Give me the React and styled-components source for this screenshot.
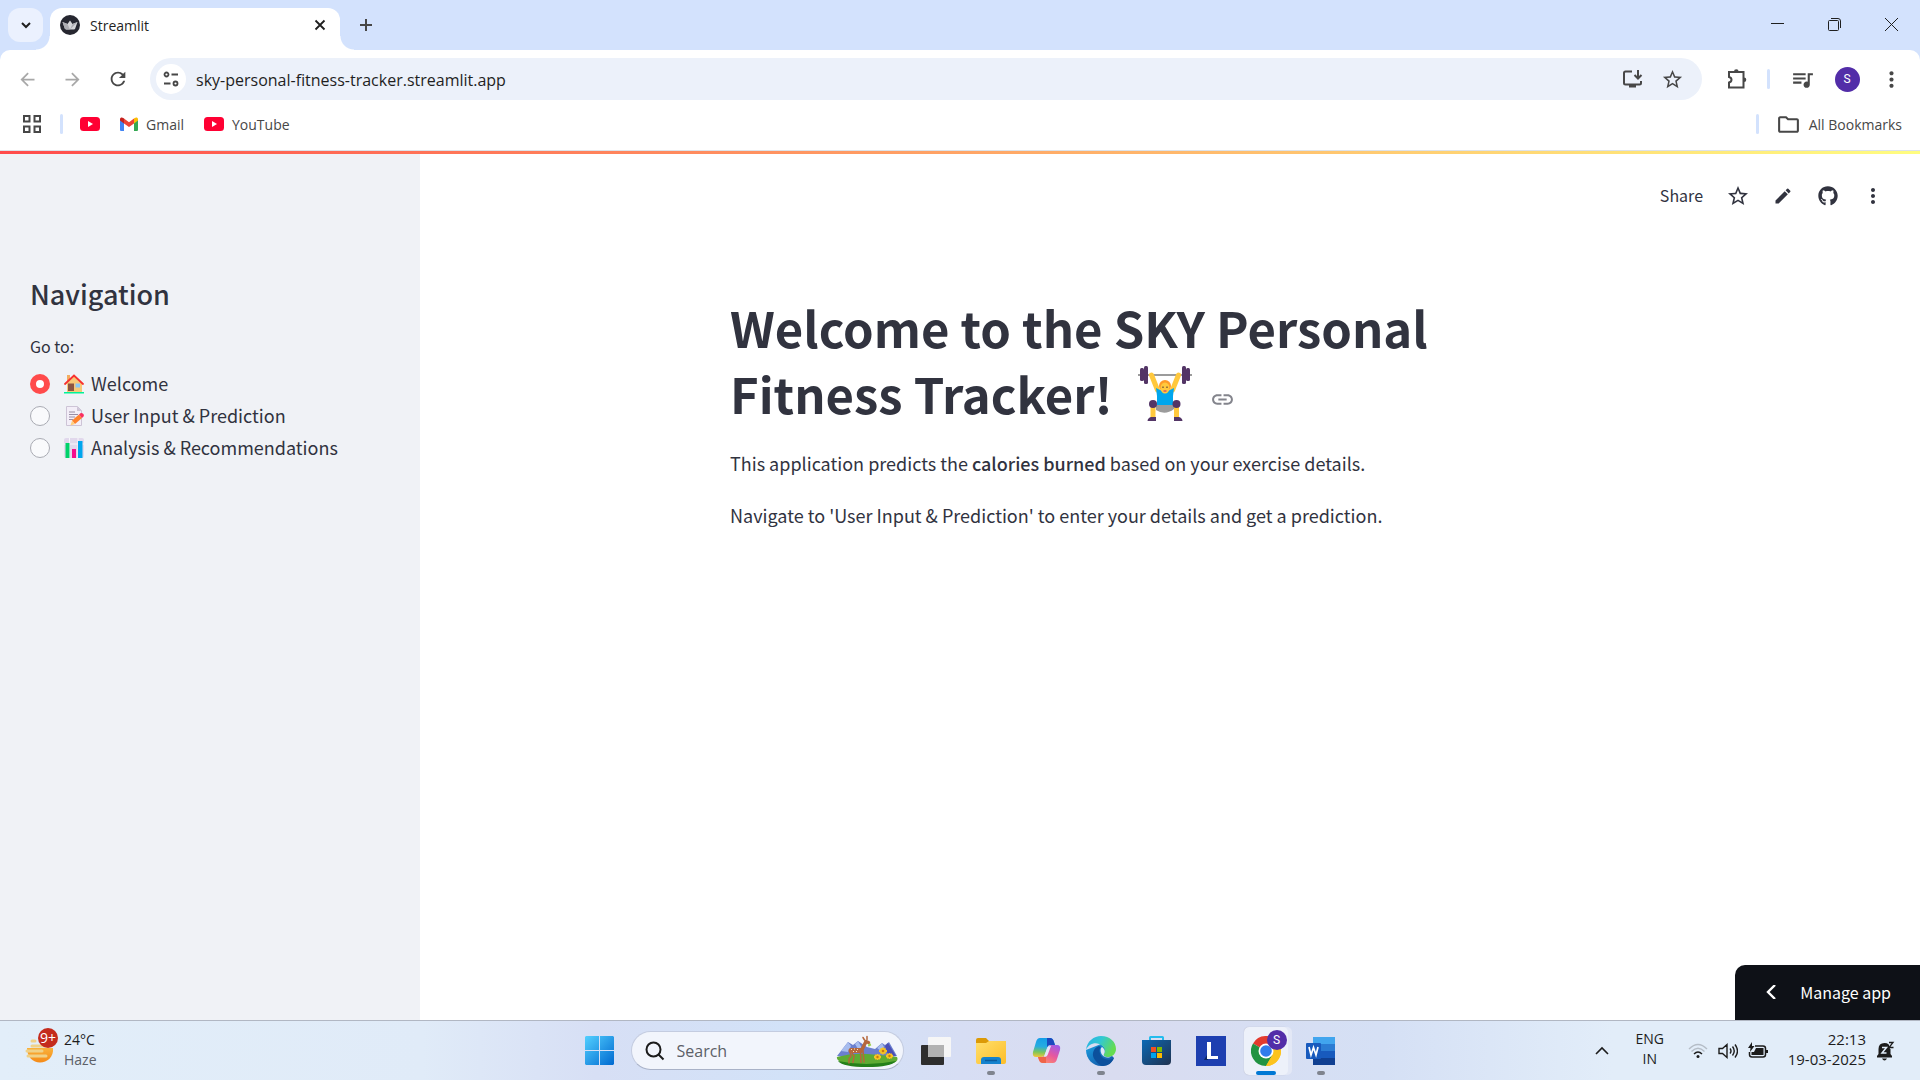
import React from "react";
import styled, { createGlobalStyle, css } from "styled-components";
import { FaGithub } from "react-icons/fa";
import {
  MdStarBorder, MdEdit, MdMoreVert, MdQueueMusic, MdOutlineFolder, MdArrowBack,
  MdArrowForward, MdRefresh, MdLink,
} from "react-icons/md";

const sourceSans = `"Noto Sans CJK JP", "Noto Sans", sans-serif`;
const uiSans = `"Open Sans", "Noto Sans", sans-serif`;

const GlobalStyle = createGlobalStyle`
  *, *::before, *::after { box-sizing: border-box; }
  body { margin: 0; background: #fff; font-family: ${uiSans}; }
  button { border: 0; padding: 0; background: none; font: inherit; color: inherit; }
  svg { display: block; flex: none; }
`;

const Screen = styled.div`
  display: flex;
  flex-direction: column;
  min-height: 100vh;
`;

/* ---------- browser chrome ---------- */
const TabStrip = styled.div`
  display: flex;
  align-items: flex-end;
  height: 50px;
  padding-left: 8px;
  background: #d3e2fd;
  color: #1f1f1f;
`;
const TabSearch = styled.button`
  display: grid;
  place-items: center;
  width: 35px;
  height: 34px;
  margin: 0 7px 8px 0;
  border-radius: 12px;
  background: #ebf1fe;
`;
const Tab = styled.div`
  position: relative;
  display: flex;
  align-items: center;
  gap: 10px;
  width: 290px;
  height: 42px;
  padding: 0 14px 8px 10px;
  border-radius: 12px 12px 0 0;
  background: #fff;
  font-size: 14px;
  &::before, &::after {
    content: "";
    position: absolute;
    bottom: 0;
    width: 14px;
    height: 14px;
  }
  &::before { left: -14px; background: radial-gradient(circle at 0 0, transparent 13px, #fff 14px); }
  &::after { right: -14px; background: radial-gradient(circle at 100% 0, transparent 13px, #fff 14px); }
`;
const TabTitle = styled.span`
  flex: 1;
`;
const NewTab = styled.button`
  display: grid;
  place-items: center;
  width: 36px;
  height: 34px;
  margin: 0 0 8px 8px;
  color: #474747;
`;
const WindowButtons = styled.div`
  display: flex;
  align-self: stretch;
  margin-left: auto;
`;
const WindowButton = styled.button`
  display: grid;
  place-items: center;
  width: 57px;
  height: 48px;
`;
const Chrome = styled.header`
  background: #d3e2fd;
`;
const ChromeBody = styled.div`
  border-radius: 10px 10px 0 0;
  border-bottom: 1px solid #dde3ea;
  background: #fff;
`;
const Toolbar = styled.div`
  display: flex;
  align-items: center;
  padding: 8px 5px 0;
  color: #474747;
`;
const IconButton = styled.button`
  display: grid;
  place-items: center;
  width: ${(p) => p.$w || 45}px;
  height: 42px;
  color: ${(p) => (p.$muted ? "#a8a8a8" : "inherit")};
`;
const Omnibox = styled.div`
  display: flex;
  align-items: center;
  flex: 1;
  height: 42px;
  margin: 0 12px 0 10px;
  padding: 0 10px 0 6px;
  border-radius: 21px;
  background: #ecf1fa;
`;
const SiteInfo = styled.button`
  display: grid;
  place-items: center;
  width: 30px;
  height: 30px;
  border-radius: 50%;
  background: #fff;
`;
const Address = styled.input`
  flex: 1;
  min-width: 0;
  margin-left: 10px;
  padding: 1px 0 0;
  border: 0;
  outline: 0;
  background: none;
  color: #1f1f1f;
  font: 16px/24px ${uiSans};
`;
const Divider = styled.span`
  width: 3px;
  height: 20px;
  border-radius: 2px;
  background: #d3e2fd;
`;
const Avatar = styled.span`
  display: grid;
  place-items: center;
  width: ${(p) => p.$size}px;
  height: ${(p) => p.$size}px;
  border-radius: 50%;
  background: #522da8;
  color: #fff;
  font: 12px/1 Roboto, sans-serif;
`;
const Bookmarks = styled.nav`
  display: flex;
  align-items: center;
  height: 50px;
  padding: 0 18px 2px 22px;
  color: #474747;
  font-size: 14px;
`;
const Bookmark = styled.a`
  display: flex;
  align-items: center;
  gap: 8px;
  margin-left: ${(p) => p.$gap || 20}px;
  color: inherit;
  text-decoration: none;
`;
const Spacer = styled.span`
  flex: 1;
`;

/* ---------- Streamlit app ---------- */
const Decoration = styled.div`
  height: 3px;
  background: linear-gradient(90deg, #ff4b4b, #fffd80);
`;
const AppBody = styled.div`
  position: relative;
  display: flex;
  flex: 1;
  color: #31333f;
  font-family: ${sourceSans};
`;
const Sidebar = styled.aside`
  width: 420px;
  padding: 122px 30px 0;
  background: #f0f2f6;
`;
const SidebarTitle = styled.h2`
  margin: 0;
  font-size: 27px;
  line-height: 36px;
  font-weight: 500;
`;
const RadioGroup = styled.fieldset`
  display: flex;
  flex-direction: column;
  gap: 8px;
  margin: 20px 0 0;
  padding: 0;
  border: 0;
`;
const Legend = styled.legend`
  padding: 0;
  margin-bottom: 12px;
  font-size: 16px;
  line-height: 28px;
`;
const RadioLabel = styled.label`
  display: flex;
  align-items: center;
  height: 24px;
  font-size: 18px;
  line-height: 24px;
  svg { margin: 0 7px 0 14px; }
`;
const RadioText = styled.span`
  padding-bottom: 2px;
`;
const Radio = styled.input`
  appearance: none;
  width: 20px;
  height: 20px;
  margin: 0;
  border: 1px solid #a9abb3;
  border-radius: 50%;
  background: #f9fafc;
  &:checked {
    border: 6px solid #ff4b4b;
    background: #fff;
  }
`;
const Main = styled.main`
  flex: 1;
`;
const AppToolbar = styled.div`
  display: flex;
  align-items: center;
  justify-content: flex-end;
  height: 84px;
  padding-right: 25px;
`;
const ShareButton = styled.button`
  margin-right: 12px;
  padding-bottom: 2px;
  font-size: 16px;
`;
const Content = styled.article`
  max-width: 880px;
  margin: 0 auto;
  padding-top: 56px;
`;
const Title = styled.h1`
  margin: 0;
  font-size: 49px;
  line-height: 66px;
  font-weight: 700;
`;
const TitleLine = styled.span`
  display: flex;
  align-items: center;
`;
const Emoji = styled.span`
  margin-left: 25px;
`;
const AnchorLink = styled.a`
  margin: 12px 0 0 18px;
  color: #83848c;
`;
const Paragraph = styled.p`
  margin: 0 0 20px;
  font-size: 18px;
  line-height: 32px;
  ${(p) => p.$first && css`margin-top: 21px;`}
  strong { font-weight: 500; }
`;
const ManageButton = styled.button`
  position: absolute;
  right: 0;
  bottom: 0;
  display: flex;
  align-items: center;
  gap: 22px;
  height: 55px;
  padding: 0 29px 2px 29px;
  border-radius: 10px 0 0 0;
  background: #0e1117;
  color: #fff;
  font-size: 16px;
`;

/* ---------- Windows taskbar ---------- */
const Taskbar = styled.footer`
  display: grid;
  grid-template-columns: 1fr auto 1fr;
  align-items: center;
  height: 60px;
  border-top: 1px solid #b1b7c3;
  background: linear-gradient(90deg, #e2eef9 0%, #e0ebf8 22%, #d7dff5 31%, #d2e2f8 41%, #d7def4 50%, #d9dcf0 58%, #d5e0f5 72%, #e2edf9 84%, #e2edf9 100%);
  color: #1c1c1c;
  font-size: 14px;
  line-height: 20px;
`;
const Weather = styled.button`
  display: flex;
  align-items: center;
  gap: 6px;
  justify-self: start;
  padding: 0 0 2px 24px;
  text-align: left;
`;
const Muted = styled.span`
  display: block;
  color: #5c6068;
`;
const Pinned = styled.div`
  display: flex;
  align-items: center;
`;
const TaskButton = styled.button`
  position: relative;
  display: grid;
  place-items: center;
  width: 55px;
  height: 58px;
  &::after {
    content: "";
    position: absolute;
    bottom: 5px;
    width: ${(p) => (p.$state === "active" ? 20 : 8)}px;
    height: 4px;
    border-radius: 2px;
    background: ${(p) => (p.$state === "active" ? "#0078d4" : p.$state === "open" ? "#7f848e" : "transparent")};
  }
`;
const ActiveTile = styled.span`
  display: grid;
  place-items: center;
  width: 44px;
  height: 48px;
  border-radius: 5px;
  background: #edf1fa;
  box-shadow: 4px 0 0 #e3e8f6, 0 0 1px #aab;
`;
const TileBadge = styled.span`
  position: absolute;
  top: 8px;
  right: 7px;
`;
const SearchBox = styled.label`
  display: flex;
  align-items: center;
  width: 273px;
  height: 39px;
  margin: 0 5px 0 4px;
  padding: 0 5px 0 13px;
  border: 1px solid #c4cce0;
  border-bottom-color: #a9b2c8;
  border-radius: 20px;
  background: #f2f5fc;
`;
const SearchInput = styled.input`
  flex: 1;
  min-width: 0;
  margin-left: 12px;
  padding: 0;
  border: 0;
  outline: 0;
  background: none;
  font: 16px/22px ${uiSans};
  &::placeholder { color: #5c6068; opacity: 1; }
`;
const Tray = styled.div`
  display: flex;
  align-items: center;
  justify-self: end;
  padding-right: 24px;
`;
const TrayButton = styled.button`
  display: grid;
  place-items: center;
  width: 30px;
  height: 40px;
`;
const Language = styled.button`
  width: 60px;
  margin: 0 3px;
  padding-bottom: 3px;
  text-align: center;
`;
const Clock = styled.button`
  margin: 0 10px 0 15px;
  padding-bottom: 3px;
  font-size: 15px;
  text-align: right;
`;
const Line = styled.span`
  display: block;
`;

/* ---------- drawings ---------- */
const Youtube = () => (
  <svg width="20" height="14" viewBox="0 0 20 14"><rect width="20" height="14" rx="3.5" fill="#ff0033" /><path d="M8 4v6l5-3z" fill="#fff" /></svg>
);
const Gmail = () => (
  <svg width="18" height="14" viewBox="0 0 18 14">
    <path d="M0 2v11a1 1 0 0 0 1 1h3V5z" fill="#4285f4" /><path d="M18 2v11a1 1 0 0 1-1 1h-3V5z" fill="#34a853" />
    <path d="M4 1.500v5L9 10l5-3.500v-5L9 5.300z" fill="#ea4335" /><path d="M0 2v1.500l4 3v-5L3.300 1C2 0 0 .4 0 2z" fill="#c5221f" />
    <path d="M18 2v1.500l-4 3v-5l.7-.5C16 0 18 .4 18 2z" fill="#fbbc04" />
  </svg>
);
const StreamlitCrown = () => (
  <svg width="20" height="20" viewBox="0 0 20 20">
    <circle cx="10" cy="10" r="10" fill="#262730" />
    <path d="M2.500 7l5 2L10 5.500 12.500 9l5-2-2.300 6.500c-.2.700-.5.900-1.200.9H6c-.7 0-1-.2-1.200-.9z" fill="#d5d5d8" />
    <path d="M2.500 7l5 2 2.500 5.400H6c-.7 0-1-.2-1.200-.9zM17.500 7l-5 2-2.500 5.400z" fill="#aeaeb3" />
  </svg>
);
const Stroke = ({ size = 20, w = 2, d, children, box = 20 }) => (
  <svg width={size} height={size} viewBox={`0 0 ${box} ${box}`} fill="none" stroke="currentColor" strokeWidth={w}><path d={d} />{children}</svg>
);
const House = () => (
  <svg width="20" height="20" viewBox="0 0 20 20">
    <path d="M3 1h3v6H3z" fill="#f3ad61" /><path d="M3 9l7-7 8 7v9H3z" fill="#f7c878" />
    <path d="M1 10L10 1.500 19 10" fill="none" stroke="#f8312f" strokeWidth="1.800" strokeLinecap="round" />
    <path d="M4 9.500h6V17H4z" fill="#8c5543" /><path d="M11.500 9.500h4.500v4h-4.500z" fill="#8ac8f5" /><path d="M0 18h20v1.500H0z" fill="#00f397" />
  </svg>
);
const Memo = () => (
  <svg width="20" height="20" viewBox="0 0 20 20">
    <path d="M2.500.5h11l4 4v15h-15z" fill="#f3eef8" stroke="#cdc4d6" /><path d="M13 .5v4.500h4.500" fill="#cdc4d6" />
    <path d="M5 6h6M5 8.500h9M5 11h6M5 13.500h4" stroke="#998ea4" /><path d="M8 14.500l7-6 3 3.500-7 6z" fill="#ff822d" />
    <path d="M8 14.500l3 3.500-4.500 1.500z" fill="#ffce7c" /><path d="M15 8.500l1.500-1.300c1.600-1 4.500 1.300 3 3.300L18 12z" fill="#f92f60" />
  </svg>
);
const BarChart = () => (
  <svg width="20" height="20" viewBox="0 0 20 20">
    <rect width="20" height="20" rx="2" fill="#e1d8ec" /><path d="M5.500 0v20M14 0v20M0 6h20" stroke="#f8f5fb" />
    <path d="M1.500 5h4v15h-4z" fill="#00d26a" /><path d="M8 11h4v9H8z" fill="#f70a8d" /><path d="M14 3h4.500v17H14z" fill="#00a6ed" />
  </svg>
);
const Lifter = () => (
  <svg width="54" height="55" viewBox="0 0 54 55">
    <path d="M0 9h54" stroke="#9b9b9b" strokeWidth="2" />
    <path d="M13.500 9l6 15M40.500 9l-6 15" stroke="#ffc83d" strokeWidth="5" strokeLinecap="round" />
    <path d="M15 40v12M38.500 40v12" stroke="#ffc83d" strokeWidth="5" />
    <path d="M18 22q9 6 18 0l-1 8v10H19V30z" fill="#00a6ed" />
    <path d="M18 39h18v4q-9 7-18 1z" fill="#9b9b9b" />
    <rect x="11" y="34" width="8" height="8" rx="4" fill="#533566" /><rect x="34.500" y="34" width="8" height="8" rx="4" fill="#533566" />
    <path d="M9.500 55c0-2 2-4 4-4H18v4zM44.500 55c0-2-2-4-4-4H36v4z" fill="#533566" />
    <circle cx="27" cy="20" r="6" fill="#ff9b26" /><ellipse cx="27" cy="22" rx="4.500" ry="5.500" fill="#ffc83d" />
    <path d="M25 20.500v1.500M29 20.500v1.500" stroke="#402a32" /><path d="M25.500 25h3" stroke="#bb1d80" />
    <rect x="2" y="2" width="4" height="13" rx="1.500" fill="#533566" /><rect x="6" width="4" height="18" rx="1.500" fill="#533566" />
    <rect x="44" width="4" height="18" rx="1.500" fill="#533566" /><rect x="48" y="2" width="4" height="13" rx="1.500" fill="#533566" />
  </svg>
);
const WindowsLogo = () => (
  <svg width="29" height="29" viewBox="0 0 29 29">
    <defs><linearGradient id="win" gradientUnits="userSpaceOnUse" x1="0" y1="0" x2="29" y2="29"><stop stopColor="#53d0ff" /><stop offset="1" stopColor="#0069d0" /></linearGradient></defs>
    <path d="M1 0h13v14H0V1zM15 0h13l1 1v13H15zM0 15h14v14H1l-1-1zM15 15h14v13l-1 1H15z" fill="url(#win)" />
  </svg>
);
const Fawn = () => (
  <svg width="62" height="32" viewBox="0 0 62 32">
    <path d="M1 21L12 7l5 3 5-4 9 6 8 2 7-6 3 2 4-3 8 14-30 5z" fill="#6b7fce" />
    <path d="M5 16l7-9 3 4-3 6zM19 9l3-3 4 7-4 1zM41 13l5-5 2 4-3 4z" fill="#a7bcee" /><path d="M52 8l8 13-8-1-3-9z" fill="#4a4fb5" />
    <path d="M1 22q15-4 30-3t30 3q2 4-4 6-26 6-51 0-6-3-5-6z" fill="#5fab33" /><path d="M2 26q28 6 58 0-5 6-29 6T2 26z" fill="#25801a" />
    <g stroke="#b5673b" fill="none" strokeLinecap="round">
      <path d="M15 15.500h10" strokeWidth="5" /><path d="M26 14.500l3.500-7" strokeWidth="3.500" /><path d="M30 6.500l2.500 1" strokeWidth="3.500" />
      <path d="M28.500 5l-1.500-2.500M31 4.500V1.500" strokeWidth="1.500" /><path d="M14 17l1 4-2 3v4M16 18l2 3-1 6.500M24.500 17l.5 10.500M27 16l1 11" strokeWidth="1.500" />
    </g>
    <path d="M15 14.500h1M18 14h1M21 14.500h1M17 16.500h1M20 16.500h1" stroke="#f7dfc0" /><path d="M33 9l1 2" stroke="#9fd04c" strokeWidth="3" />
    <g stroke="#f9c322" strokeWidth="1.800"><path d="M43 16h8M47 12.500v7M44.500 13.500l5 5M49.500 13.500l-5 5M38 22h7M41.500 19v6M39 20l5 4M44 20l-5 4M50 21h7M53.500 18v6M51 19l5 4M56 19l-5 4" /></g>
    <g fill="#c87812"><circle cx="47" cy="16" r="1.300" /><circle cx="41.500" cy="22" r="1.200" /><circle cx="53.500" cy="21" r="1.200" /></g>
  </svg>
);
const TaskView = () => (
  <svg width="30" height="28" viewBox="0 0 30 28"><rect y="8" width="23" height="20" rx="1" fill="#2e2e2e" /><rect x="7" width="23" height="20" rx="1" fill="#f6f6f6" /><path d="M7 8h16v12H8l-1-1z" fill="#b2b2b2" /></svg>
);
const Folder = () => (
  <svg width="30" height="26" viewBox="0 0 30 26">
    <defs><linearGradient id="fold" x2="1" y2="1"><stop stopColor="#ffdf6c" /><stop offset="1" stopColor="#fdbd28" /></linearGradient></defs>
    <path d="M0 2q0-2 2-2h8l3 3h15q2 0 2 2v8H0z" fill="#dc9a06" /><path d="M0 5h10l3-2h17v21q0 2-2 2H2q-2 0-2-2z" fill="url(#fold)" />
    <path d="M5 26v-4q0-3 3-3h14q3 0 3 3v4z" fill="#1482ce" /><path d="M9 22.500h12" stroke="#0b5b9c" strokeWidth="1.500" />
  </svg>
);
const Copilot = () => (
  <svg width="29" height="27" viewBox="0 0 29 27">
    <defs>
      <linearGradient id="cpa" x1=".4" x2=".3" y2="1"><stop stopColor="#159ee8" /><stop offset=".45" stopColor="#27ace0" /><stop offset=".75" stopColor="#7bc65b" /><stop offset="1" stopColor="#f0c63c" /></linearGradient>
      <linearGradient id="cpb" x1=".8" x2=".2" y2="1"><stop stopColor="#9f5be8" /><stop offset=".5" stopColor="#e7589e" /><stop offset="1" stopColor="#ff9068" /></linearGradient>
    </defs>
    <path d="M8 1h10q3 0 4 4l1 3h-5q-2 0-3 3l-2 6q-1 3-4 3H4q-4 0-3-5L4 5q1-4 4-4z" fill="url(#cpa)" />
    <path d="M15 1h3q3 0 4 4l1 3h-5q-2 0-3 2z" fill="#1b48be" />
    <path d="M21 26H11q-3 0-4-3l-1-3h4q3 0 4-3l2-6q1-3 4-3h5q4 0 3 5l-3 9q-1 4-4 4z" fill="url(#cpb)" />
    <path d="M14 26h-3q-3 0-4-3l-1-3h4q3 0 4-3z" fill="#ef6549" /><path d="M13 17l2-5q1-3 3.500-3h.5l-3 8q-1 3-3.500 3H12q.5-1 1-3z" fill="#e4e6f8" />
  </svg>
);
const Edge = () => (
  <svg width="30" height="30" viewBox="0 0 30 30">
    <defs>
      <linearGradient id="ed1" x2="1" y2=".4"><stop stopColor="#27b0e8" /><stop offset=".5" stopColor="#32c8d2" /><stop offset="1" stopColor="#65dc50" /></linearGradient>
      <linearGradient id="ed2" x2=".7" y2="1"><stop stopColor="#1ba0e2" /><stop offset="1" stopColor="#1459a8" /></linearGradient>
    </defs>
    <path d="M0 14C0 23 7 30 15 30c5 0 10-2 13-8L15 8z" fill="url(#ed2)" />
    <path d="M0 14C1 5 8 0 15 0c9 0 15 6 15 13 0 5-4 8-8 8-3 0-5-1-4-3 2-3 1-8-5-10C8 6 2 9 0 14z" fill="url(#ed1)" />
    <path d="M13 10c-6 2-8 9-4 14 3 4 6 6 8 6 5 0 9-3 11-8-4 3-9 2-12-1-3-4-3-8-1-10z" fill="#0c509c" />
    <path d="M18 18c-1 2 1 3 4 3q2.500 0 4-1c-4 3-9 1-10.500-2-1.500-3-1-6 .5-7 3 2 3.500 5 2 7z" fill="#dfe6f6" />
  </svg>
);
const Store = () => (
  <svg width="29" height="29" viewBox="0 0 29 29">
    <defs><linearGradient id="st" x2="1" y2="1"><stop stopColor="#0c69b5" /><stop offset="1" stopColor="#20324f" /></linearGradient></defs>
    <path d="M8 6V1.500q0-.5.500-.5h12q.5 0 .5.500V6" fill="none" stroke="#24bced" strokeWidth="2" /><path d="M0 4h29v21q0 4-4 4H4q-4 0-4-4z" fill="url(#st)" />
    <path d="M9 11h5v5H9z" fill="#f25022" /><path d="M15 11h5v5h-5z" fill="#7fba00" /><path d="M9 17h5v5H9z" fill="#00a4ef" /><path d="M15 17h5v5h-5z" fill="#ffb900" />
  </svg>
);
const LApp = () => (
  <svg width="30" height="30" viewBox="0 0 30 30"><path d="M0 0h30v30H0z" fill="#1d3fb0" /><path d="M11 7v12l-3 5h4z" fill="#0c2763" /><path d="M11 6h4v14h7v3H11z" fill="#fff" /></svg>
);
const ChromeLogo = () => (
  <svg width="30" height="30" viewBox="0 0 30 30">
    <path d="M15 15L2 7.500A15 15 0 0 1 28 7.500z" fill="#e33b2e" /><path d="M15 15l13-7.500A15 15 0 0 1 15 30z" fill="#fcc31e" /><path d="M15 15L2 7.500A15 15 0 0 0 15 30l6.500-11.300z" fill="#229342" />
    <path d="M15 8h13.300A15 15 0 0 1 15 30l6.500-11z" fill="#fcc31e" /><circle cx="15" cy="15" r="7.500" fill="#fff" /><circle cx="15" cy="15" r="5.800" fill="#317ceb" />
  </svg>
);
const Word = () => (
  <svg width="30" height="28" viewBox="0 0 30 28">
    <path d="M7 0h22v7H7z" fill="#41a5ee" /><path d="M7 7h22v7H7z" fill="#2b7cd3" /><path d="M7 14h22v7H7z" fill="#185abd" /><path d="M7 21h22v7H7z" fill="#103f91" />
    <rect y="6" width="15" height="16" rx="1" fill="#185abd" /><path d="M3 10l2 8 2.500-7.500L10 18l2-8" fill="none" stroke="#fff" strokeWidth="1.700" />
  </svg>
);
const HazeIcon = () => (
  <svg width="34" height="44" viewBox="0 0 34 44">
    <defs><linearGradient id="sun" x2="0" y2="1"><stop stopColor="#f9b23c" /><stop offset="1" stopColor="#f58a17" /></linearGradient></defs>
    <path d="M3 20h26c1 9-6 14.500-13 14.500S3 29 3 20z" fill="url(#sun)" />
    <path d="M8 13h3M8 18h14M3 23h15M4 28h18" stroke="#f0d187" strokeWidth="3" strokeLinecap="round" />
    <circle cx="24" cy="10" r="10" fill="#c42b1c" /><text x="24" y="15" textAnchor="middle" fill="#fff" fontSize="14" fontFamily="Open Sans, sans-serif">9+</text>
  </svg>
);

const PAGES = [
  { label: "Welcome", Icon: House },
  { label: "User Input & Prediction", Icon: Memo },
  { label: "Analysis & Recommendations", Icon: BarChart },
];
const APPS = [
  { name: "Task view", Icon: TaskView },
  { name: "File Explorer", Icon: Folder, state: "open" },
  { name: "Copilot", Icon: Copilot },
  { name: "Edge", Icon: Edge, state: "open" },
  { name: "Microsoft Store", Icon: Store },
  { name: "L", Icon: LApp },
  { name: "Chrome", Icon: ChromeLogo, state: "active" },
  { name: "Word", Icon: Word, state: "open" },
];

function BrowserChrome() {
  return (
    <Chrome>
      <TabStrip>
        <TabSearch aria-label="Search tabs"><Stroke size={10} box={10} d="M1 3l4 4 4-4" /></TabSearch>
        <Tab>
          <StreamlitCrown />
          <TabTitle>Streamlit</TabTitle>
          <button aria-label="Close tab"><Stroke size={12} box={12} w={1.8} d="M1.500 1.500l9 9M10.500 1.500l-9 9" /></button>
        </Tab>
        <NewTab aria-label="New tab"><Stroke size={14} box={14} d="M7 1v12M1 7h12" /></NewTab>
        <WindowButtons>
          <WindowButton aria-label="Minimize"><Stroke size={13} box={13} w={1} d="M0 5.500h13" /></WindowButton>
          <WindowButton aria-label="Restore"><Stroke size={13} box={13} w={1} d="M.5 3.500q0-1 1-1h8q1 0 1 1v8q0 1-1 1h-8q-1 0-1-1zM3 .5h7q2.500 0 2.500 2.500v7" /></WindowButton>
          <WindowButton aria-label="Close"><Stroke size={13} box={13} w={1} d="M0 0l13 13M13 0L0 13" /></WindowButton>
        </WindowButtons>
      </TabStrip>
      <ChromeBody>
        <Toolbar>
          <IconButton aria-label="Back" $muted><MdArrowBack size={21} /></IconButton>
          <IconButton aria-label="Forward" $muted><MdArrowForward size={21} /></IconButton>
          <IconButton aria-label="Reload"><MdRefresh size={22} /></IconButton>
          <Omnibox>
            <SiteInfo aria-label="Site information">
              <Stroke size={16} box={16} w={1.8} d="M8.500 3.500H15M1 12.500h6.500"><circle cx="3.500" cy="3.500" r="2" /><circle cx="12.500" cy="12.500" r="2" /></Stroke>
            </SiteInfo>
            <Address aria-label="Address" defaultValue="sky-personal-fitness-tracker.streamlit.app" />
            <IconButton $w={40} aria-label="Install app">
              <Stroke size={21} box={21} w={2} d="M10 2.500H3.500q-1.500 0-1.500 1.500v10q0 1.500 1.500 1.500h14q1.500 0 1.500-1.500v-2M16 1v8M12.500 6l3.500 3.500L19.500 6M7 17.500h7" />
            </IconButton>
            <IconButton $w={40} aria-label="Bookmark this page"><MdStarBorder size={23} /></IconButton>
          </Omnibox>
          <IconButton aria-label="Extensions">
            <Stroke size={22} box={22} d="M3 4h14.500v15.500H3v-5q2.500-.5 2.500-2.700T3 9z"><path d="M8 3.500a2.300 2.300 0 0 1 4.600 0zM18 9.500a2.300 2.300 0 0 1 0 4.600z" fill="currentColor" stroke="none" /></Stroke>
          </IconButton>
          <IconButton as="span" $w={18}><Divider /></IconButton>
          <IconButton $w={50} aria-label="Media controls"><MdQueueMusic size={25} /></IconButton>
          <IconButton $w={40} aria-label="Profile"><Avatar $size={25}>S</Avatar></IconButton>
          <IconButton $w={48} aria-label="Browser menu"><MdMoreVert size={25} /></IconButton>
        </Toolbar>
        <Bookmarks>
          <button aria-label="Apps"><Stroke size={20} box={20} d="M2 2h5.500v5.500H2zM12.500 2H18v5.500h-5.500zM2 12.500h5.500V18H2zM12.500 12.500H18V18h-5.500z" /></button>
          <Bookmark as="span" $gap={18}><Divider /></Bookmark>
          <Bookmark href="#youtube" aria-label="YouTube" $gap={17}><Youtube /></Bookmark>
          <Bookmark href="#gmail"><Gmail />Gmail</Bookmark>
          <Bookmark href="#youtube"><Youtube />YouTube</Bookmark>
          <Spacer />
          <Divider />
          <Bookmark href="#all" $gap={17}><MdOutlineFolder size={25} />All Bookmarks</Bookmark>
        </Bookmarks>
      </ChromeBody>
    </Chrome>
  );
}

function StreamlitApp() {
  return (
    <>
      <Decoration />
      <AppBody>
        <Sidebar>
          <SidebarTitle>Navigation</SidebarTitle>
          <RadioGroup>
            <Legend>Go to:</Legend>
            {PAGES.map(({ label, Icon }, i) => (
              <RadioLabel key={label}>
                <Radio type="radio" name="page" defaultChecked={i === 0} />
                <Icon />
                <RadioText>{label}</RadioText>
              </RadioLabel>
            ))}
          </RadioGroup>
        </Sidebar>
        <Main>
          <AppToolbar>
            <ShareButton>Share</ShareButton>
            <IconButton aria-label="Favorite"><MdStarBorder size={24} /></IconButton>
            <IconButton aria-label="Edit"><MdEdit size={20} /></IconButton>
            <IconButton aria-label="View source"><FaGithub size={20} /></IconButton>
            <IconButton aria-label="App menu"><MdMoreVert size={24} /></IconButton>
          </AppToolbar>
          <Content>
            <Title>
              Welcome to the SKY Personal
              <TitleLine>
                Fitness Tracker!<Emoji><Lifter /></Emoji>
                <AnchorLink href="#welcome" aria-label="Link to heading"><MdLink size={25} /></AnchorLink>
              </TitleLine>
            </Title>
            <Paragraph $first>This application predicts the <strong>calories burned</strong> based on your exercise details.</Paragraph>
            <Paragraph>Navigate to 'User Input &amp; Prediction' to enter your details and get a prediction.</Paragraph>
          </Content>
        </Main>
        <ManageButton><Stroke size={14} box={14} w={2.4} d="M11 0L4 7l7 7" />Manage app</ManageButton>
      </AppBody>
    </>
  );
}

function WindowsTaskbar() {
  return (
    <Taskbar>
      <Weather><HazeIcon /><Line>24°C<Muted>Haze</Muted></Line></Weather>
      <Pinned>
        <TaskButton aria-label="Start"><WindowsLogo /></TaskButton>
        <SearchBox>
          <Stroke size={20} box={20} w={2} d="M13.500 13.500L18.500 18.500"><circle cx="8.500" cy="8.500" r="7" /></Stroke>
          <SearchInput aria-label="Search" placeholder="Search" />
          <Fawn />
        </SearchBox>
        {APPS.map(({ name, Icon, state }) => (
          <TaskButton key={name} aria-label={name} $state={state}>
            {state === "active" ? <ActiveTile><Icon /><TileBadge><Avatar $size={20}>S</Avatar></TileBadge></ActiveTile> : <Icon />}
          </TaskButton>
        ))}
      </Pinned>
      <Tray>
        <TrayButton aria-label="Show hidden icons"><Stroke size={14} box={14} w={1.6} d="M1 10l6-6 6 6" /></TrayButton>
        <Language><Line>ENG</Line><Line>IN</Line></Language>
        <TrayButton aria-label="Network">
          <svg width="20" height="16" viewBox="0 0 20 16" fill="none" stroke="#1c1c1c" strokeWidth="1.400">
            <path d="M1 6q9-9 18 0M3.500 8.500q6.500-6.500 13 0" stroke="#b5bdc7" /><path d="M6 11q4-4 8 0" /><circle cx="10" cy="13.500" r="1.500" fill="#1c1c1c" stroke="none" />
          </svg>
        </TrayButton>
        <TrayButton aria-label="Volume"><Stroke size={20} w={1.4} d="M1 7.500h3.500L9 3.500v13l-4.500-4H1zM12 7.500q2 2.500 0 5M14.500 5.500q3.500 4.500 0 9M17 3.500q5 6.500 0 13" /></TrayButton>
        <TrayButton aria-label="Battery">
          <svg width="20" height="18" viewBox="0 0 20 18"><path d="M7 4h8q2.500 0 2.500 2.500v6Q17.500 15 15 15H4q-2.500 0-2.500-2.500V10" fill="none" stroke="#1c1c1c" strokeWidth="1.500" /><path d="M8 6h7.500v7h-12v-3H6z" fill="#1c1c1c" /><path d="M18 8h2v3h-2zM4 0L0 6h2.500L2 10l4.500-6H4z" fill="#1c1c1c" /></svg>
        </TrayButton>
        <Clock><Line>22:13</Line><Line>19-03-2025</Line></Clock>
        <button aria-label="Notifications">
          <svg width="20" height="20" viewBox="0 0 20 20"><path d="M8.500 2q5 0 6 5v6l1.500 2v1.500H1V15l1.500-2V8q0-6 6-6zM6 17.500h5q-1 2-2.500 2T6 17.500z" fill="#1c1c1c" /><path d="M12 0h8v8h-6z" fill="#e2edf9" /><path d="M6 6.500h4.500L6 12h4.500" stroke="#e2edf9" strokeWidth="1.500" fill="none" /><path d="M13 1.500h4L13 6.500h4.500" stroke="#1c1c1c" strokeWidth="1.300" fill="none" /></svg>
        </button>
      </Tray>
    </Taskbar>
  );
}

export default function App() {
  return (
    <>
      <GlobalStyle />
      <Screen>
        <BrowserChrome />
        <StreamlitApp />
        <WindowsTaskbar />
      </Screen>
    </>
  );
}
